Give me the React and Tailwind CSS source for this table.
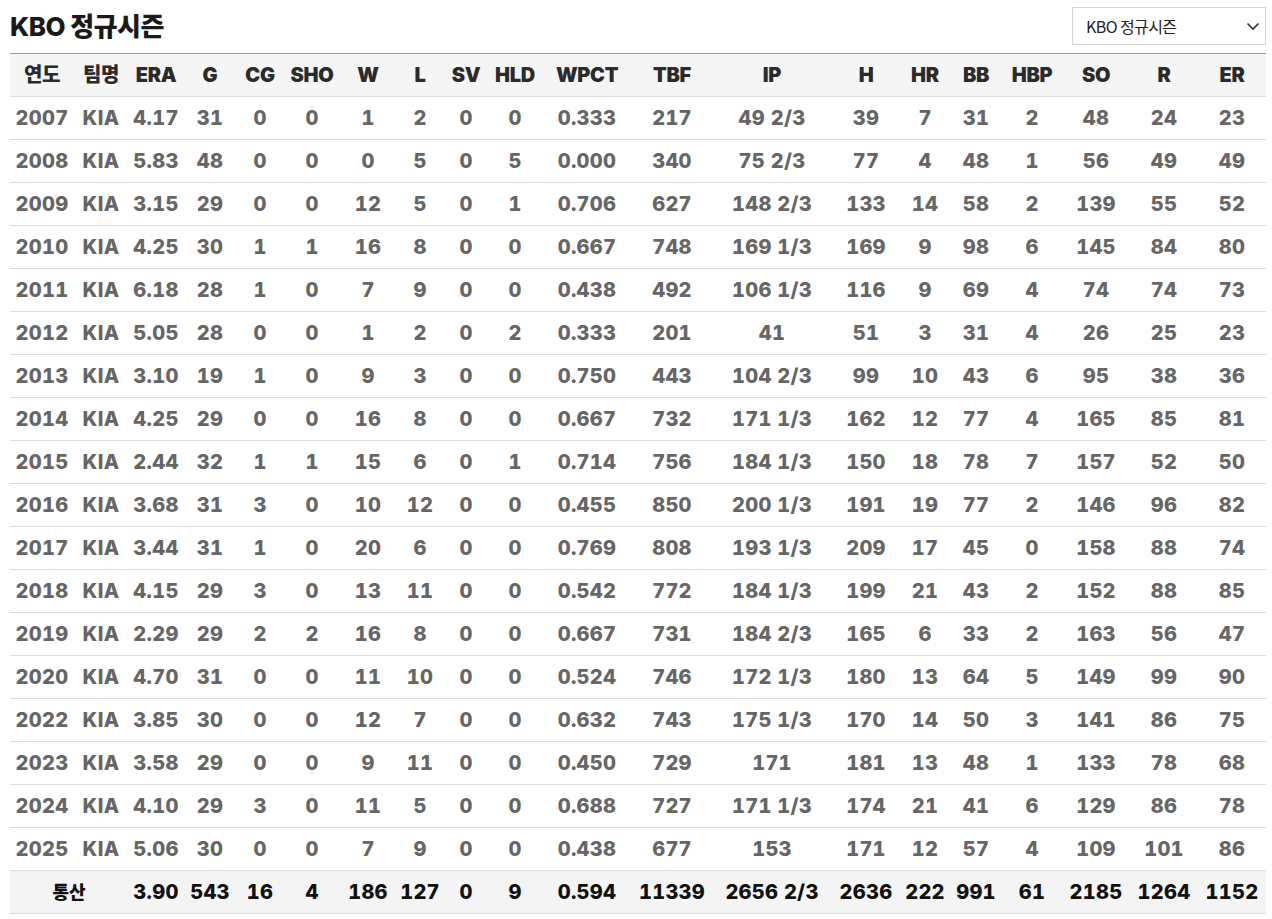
import React from "react";

const headers = ["연도","팀명","ERA","G","CG","SHO","W","L","SV","HLD","WPCT","TBF","IP","H","HR","BB","HBP","SO","R","ER"];
const widths = [64,54,56,52,48,56,56,48,44,54,90,80,120,68,50,52,60,68,68,68];

const raw = `2007 KIA 4.17 31 0 0 1 2 0 0 0.333 217 49_2/3 39 7 31 2 48 24 23
2008 KIA 5.83 48 0 0 0 5 0 5 0.000 340 75_2/3 77 4 48 1 56 49 49
2009 KIA 3.15 29 0 0 12 5 0 1 0.706 627 148_2/3 133 14 58 2 139 55 52
2010 KIA 4.25 30 1 1 16 8 0 0 0.667 748 169_1/3 169 9 98 6 145 84 80
2011 KIA 6.18 28 1 0 7 9 0 0 0.438 492 106_1/3 116 9 69 4 74 74 73
2012 KIA 5.05 28 0 0 1 2 0 2 0.333 201 41 51 3 31 4 26 25 23
2013 KIA 3.10 19 1 0 9 3 0 0 0.750 443 104_2/3 99 10 43 6 95 38 36
2014 KIA 4.25 29 0 0 16 8 0 0 0.667 732 171_1/3 162 12 77 4 165 85 81
2015 KIA 2.44 32 1 1 15 6 0 1 0.714 756 184_1/3 150 18 78 7 157 52 50
2016 KIA 3.68 31 3 0 10 12 0 0 0.455 850 200_1/3 191 19 77 2 146 96 82
2017 KIA 3.44 31 1 0 20 6 0 0 0.769 808 193_1/3 209 17 45 0 158 88 74
2018 KIA 4.15 29 3 0 13 11 0 0 0.542 772 184_1/3 199 21 43 2 152 88 85
2019 KIA 2.29 29 2 2 16 8 0 0 0.667 731 184_2/3 165 6 33 2 163 56 47
2020 KIA 4.70 31 0 0 11 10 0 0 0.524 746 172_1/3 180 13 64 5 149 99 90
2022 KIA 3.85 30 0 0 12 7 0 0 0.632 743 175_1/3 170 14 50 3 141 86 75
2023 KIA 3.58 29 0 0 9 11 0 0 0.450 729 171 181 13 48 1 133 78 68
2024 KIA 4.10 29 3 0 11 5 0 0 0.688 727 171_1/3 174 21 41 6 129 86 78
2025 KIA 5.06 30 0 0 7 9 0 0 0.438 677 153 171 12 57 4 109 101 86`;

const rows = raw.split("\n").map((l) => l.trim().split(" ").map((v) => v.replace("_", " ")));
const total = ["3.90","543","16","4","186","127","0","9","0.594","11339","2656 2/3","2636","222","991","61","2185","1264","1152"];

const font = { fontFamily: "Inter, 'Noto Sans CJK KR', 'Noto Sans', sans-serif" };

export default function App() {
  return (
    <div className="bg-white w-[1272px] min-h-[919px] pl-[10px] pr-[6px]" style={font}>
      <div className="flex items-center justify-between h-[53px]">
        <h2 className="text-[26px] font-extrabold text-[#1a1a1a] tracking-[-0.5px] leading-none">KBO 정규시즌</h2>
        <div className="flex items-center justify-between w-[194px] h-[38px] border border-[#d4d4d4] pl-[13px] pr-[4px] mb-[2px]">
          <span className="text-[16px] text-[#222] tracking-[-0.6px]" style={{ fontFamily: "'Noto Sans CJK KR', sans-serif" }}>KBO 정규시즌</span>
          <svg width="16" height="16" viewBox="0 0 16 16" fill="none" stroke="#333" strokeWidth="1.7">
            <path d="M2.5 5.5 L8 11 L13.5 5.5" />
          </svg>
        </div>
      </div>
      <table className="table-fixed border-collapse w-[1256px] tabular-nums">
        <colgroup>
          {widths.map((w, i) => (
            <col key={i} style={{ width: w }} />
          ))}
        </colgroup>
        <thead>
          <tr className="bg-[#f5f5f5] border-t border-[#999] h-[43px]">
            {headers.map((h) => (
              <th key={h} className="p-0 text-center text-[20px] font-black text-[#2b2b2b] tracking-[-0.3px] border-b border-[#dcdcdc]">
                {h}
              </th>
            ))}
          </tr>
        </thead>
        <tbody>
          {rows.map((r) => (
            <tr key={r[0]} className="h-[43px]">
              {r.map((v, i) => (
                <td key={i} className="p-0 text-center text-[20px] font-extrabold text-[#666] tracking-[0.3px] border-b border-[#dcdcdc] whitespace-nowrap">
                  {v}
                </td>
              ))}
            </tr>
          ))}
          <tr className="h-[43px] bg-[#f4f4f4]">
            <td colSpan={2} className="p-0 text-center text-[18px] font-black text-[#111] border-b border-[#dcdcdc]">통산</td>
            {total.map((v, i) => (
              <td key={i} className="p-0 text-center text-[20px] font-extrabold text-[#111] tracking-[0.3px] border-b border-[#dcdcdc] whitespace-nowrap">
                {v}
              </td>
            ))}
          </tr>
        </tbody>
      </table>
    </div>
  );
}
